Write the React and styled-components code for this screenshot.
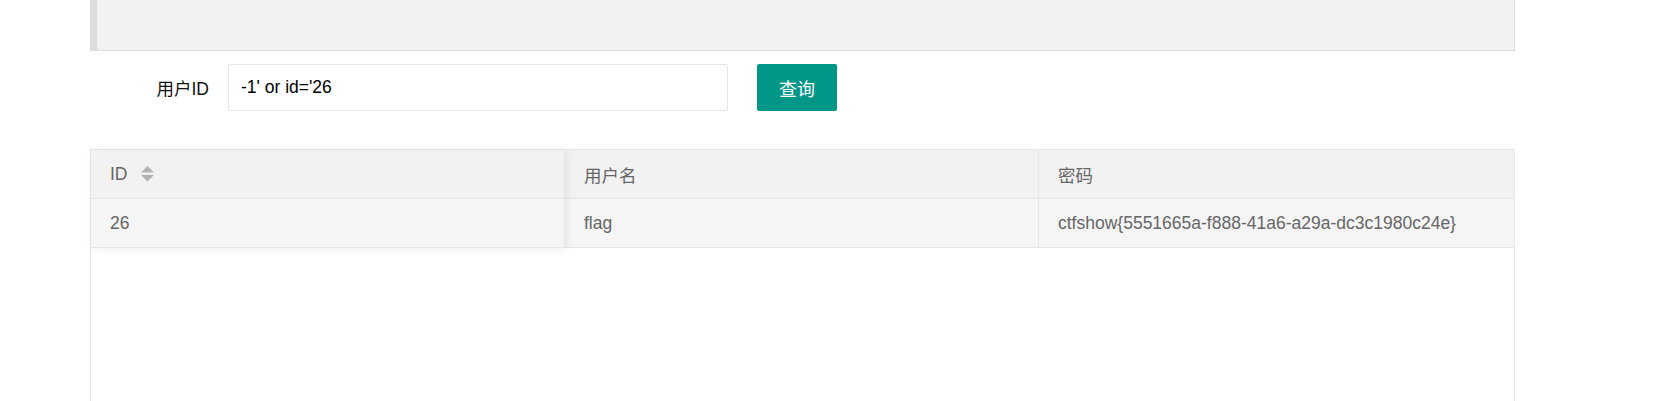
import React from 'react';
import styled, { createGlobalStyle } from 'styled-components';

const GlobalStyle = createGlobalStyle`
  html, body {
    margin: 0;
    padding: 0;
    background: #fff;
    overflow: hidden;
  }
  body {
    font-family: "Liberation Sans", Arial, "Noto Sans CJK SC", sans-serif;
    font-size: 17.5px;
    color: #333;
  }
`;

const Page = styled.div`
  width: 1425px;
  margin-left: 90px;
`;

const Quote = styled.div`
  height: 50px;
  background: #f2f2f2;
  border: 1px solid #dedede;
  border-top: 0;
  border-left: 7px solid #dddddd;
`;

const FormRow = styled.form`
  display: flex;
  align-items: center;
  margin-top: 13px;
  height: 47px;
`;

const Label = styled.label`
  width: 138px;
  box-sizing: border-box;
  padding-right: 19px;
  text-align: right;
  color: #111;
  font-size: 17.5px;
`;

const Input = styled.input`
  width: 500px;
  height: 47px;
  box-sizing: border-box;
  border: 1px solid #e6e6e6;
  border-radius: 2px;
  padding: 0 12px;
  font-family: inherit;
  font-size: 17.5px;
  color: #000;
  outline: none;
`;

const Button = styled.button`
  margin-left: 29px;
  width: 80px;
  height: 47px;
  border: none;
  border-radius: 2px;
  background: #009688;
  color: #fff;
  font-family: inherit;
  font-size: 18px;
  cursor: pointer;
`;

const Table = styled.div`
  margin-top: 38px;
  border: 1px solid #e6e6e6;
  background: #fff;
`;

const Grid = styled.div`
  display: grid;
  grid-template-columns: 474px 474px 1fr;
`;

const Column = styled.div`
  position: relative;
  z-index: ${({ $fixed }) => ($fixed ? 2 : 1)};
  box-shadow: ${({ $fixed }) => ($fixed ? '2px 1px 8px rgba(0, 0, 0, 0.07)' : 'none')};
  border-right: ${({ $last }) => ($last ? '0' : '1px solid #e6e6e6')};
`;

const Cell = styled.div`
  display: flex;
  align-items: center;
  gap: 13px;
  height: 48px;
  padding: 0 19px;
  border-bottom: 1px solid #e6e6e6;
  background: ${({ $head }) => ($head ? '#f2f2f2' : '#f5f5f5')};
  color: #666;
  font-size: 17.5px;
  white-space: nowrap;
`;

const EmptyBody = styled.div`
  height: 200px;
`;

const SortIcon = () => (
  <svg width="13" height="16" viewBox="0 0 13 16" aria-hidden="true">
    <polygon points="6.5,0 13,6.5 0,6.5" fill="#b2b2b2" />
    <polygon points="0,9 13,9 6.5,15.5" fill="#b2b2b2" />
  </svg>
);

const columns = [
  { key: 'id', title: 'ID', sortable: true },
  { key: 'username', title: '用户名' },
  { key: 'password', title: '密码' },
];

const rows = [
  { id: '26', username: 'flag', password: 'ctfshow{5551665a-f888-41a6-a29a-dc3c1980c24e}' },
];

export default function App() {
  return (
    <>
      <GlobalStyle />
      <Page>
        <Quote />
        <FormRow onSubmit={(e) => e.preventDefault()}>
          <Label>用户ID</Label>
          <Input defaultValue="-1' or id='26" />
          <Button type="submit">查询</Button>
        </FormRow>
        <Table>
          <Grid>
            {columns.map((col, i) => (
              <Column key={col.key} $fixed={i === 0} $last={i === columns.length - 1}>
                <Cell $head>
                  {col.title}
                  {col.sortable && <SortIcon />}
                </Cell>
                {rows.map((row) => (
                  <Cell key={row.id}>{row[col.key]}</Cell>
                ))}
              </Column>
            ))}
          </Grid>
          <EmptyBody />
        </Table>
      </Page>
    </>
  );
}
